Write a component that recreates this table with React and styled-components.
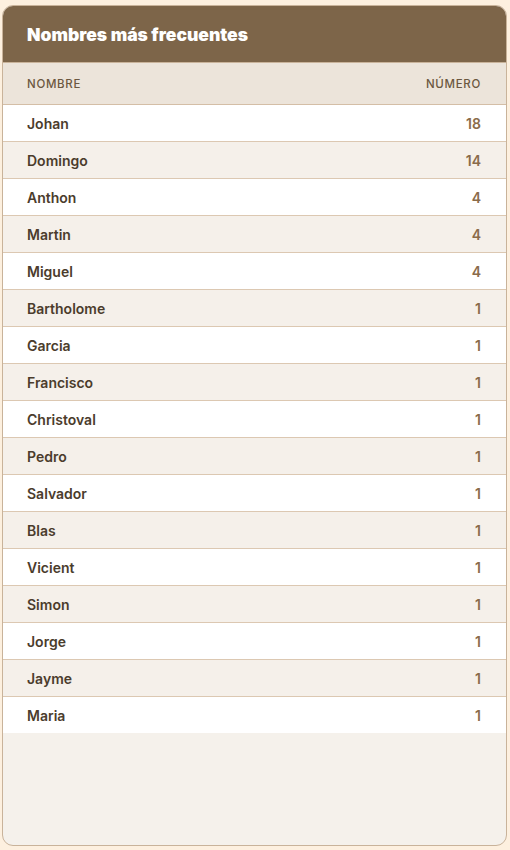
import React from "react";
import styled, { createGlobalStyle } from "styled-components";

const GlobalStyle = createGlobalStyle`
  html, body {
    margin: 0;
    padding: 0;
    background: #fdf0df;
    font-family: Inter, "Noto Sans", sans-serif;
  }
  #root {
    height: 850px;
    box-sizing: border-box;
    padding: 5px 3px 4px 2px;
    display: flex;
  }
`;

const Card = styled.div`
  flex: 1;
  display: flex;
  flex-direction: column;
  background: #f5f1eb;
  border: 1px solid #c9b39a;
  border-radius: 11px;
  overflow: hidden;
`;

const Header = styled.div`
  background: #7d6549;
  height: 57px;
  display: flex;
  align-items: center;
  padding: 0 24px;
  border-bottom: 1px solid #c9b39a;
  box-sizing: border-box;
`;

const Title = styled.h2`
  margin: 0;
  color: #ffffff;
  font-size: 17.5px;
  font-weight: 900;
  letter-spacing: 0;
`;

const Row = styled.div`
  display: flex;
  justify-content: space-between;
  align-items: center;
  height: 37px;
  padding: 0 25px 0 24px;
  box-sizing: border-box;
  background: ${(p) => (p.$alt ? "#f5f0ea" : "#ffffff")};
  border-bottom: 1px solid #dcc8b2;

  &:last-child {
    border-bottom: none;
    height: 36px;
  }
`;

const HeadRow = styled(Row)`
  height: 42px;
  background: #ece4da;
  border-bottom: 1px solid #d4bea6;
`;

const HeadCell = styled.span`
  font-size: 11.5px;
  font-weight: 500;
  letter-spacing: 0.7px;
  text-transform: uppercase;
  color: #6b5740;
`;

const Name = styled.span`
  font-size: 14px;
  font-weight: 600;
  color: #4b3c2c;
`;

const Count = styled.span`
  font-size: 14px;
  font-weight: 600;
  color: #8a6b4a;
`;

const data = [
  ["Johan", 18],
  ["Domingo", 14],
  ["Anthon", 4],
  ["Martin", 4],
  ["Miguel", 4],
  ["Bartholome", 1],
  ["Garcia", 1],
  ["Francisco", 1],
  ["Christoval", 1],
  ["Pedro", 1],
  ["Salvador", 1],
  ["Blas", 1],
  ["Vicient", 1],
  ["Simon", 1],
  ["Jorge", 1],
  ["Jayme", 1],
  ["Maria", 1],
];

export default function App() {
  return (
    <>
      <GlobalStyle />
      <Card>
        <Header>
          <Title>Nombres más frecuentes</Title>
        </Header>
        <div>
          <HeadRow>
            <HeadCell>Nombre</HeadCell>
            <HeadCell>Número</HeadCell>
          </HeadRow>
          {data.map(([name, n], i) => (
            <Row key={name} $alt={i % 2 === 1}>
              <Name>{name}</Name>
              <Count>{n}</Count>
            </Row>
          ))}
        </div>
      </Card>
    </>
  );
}
